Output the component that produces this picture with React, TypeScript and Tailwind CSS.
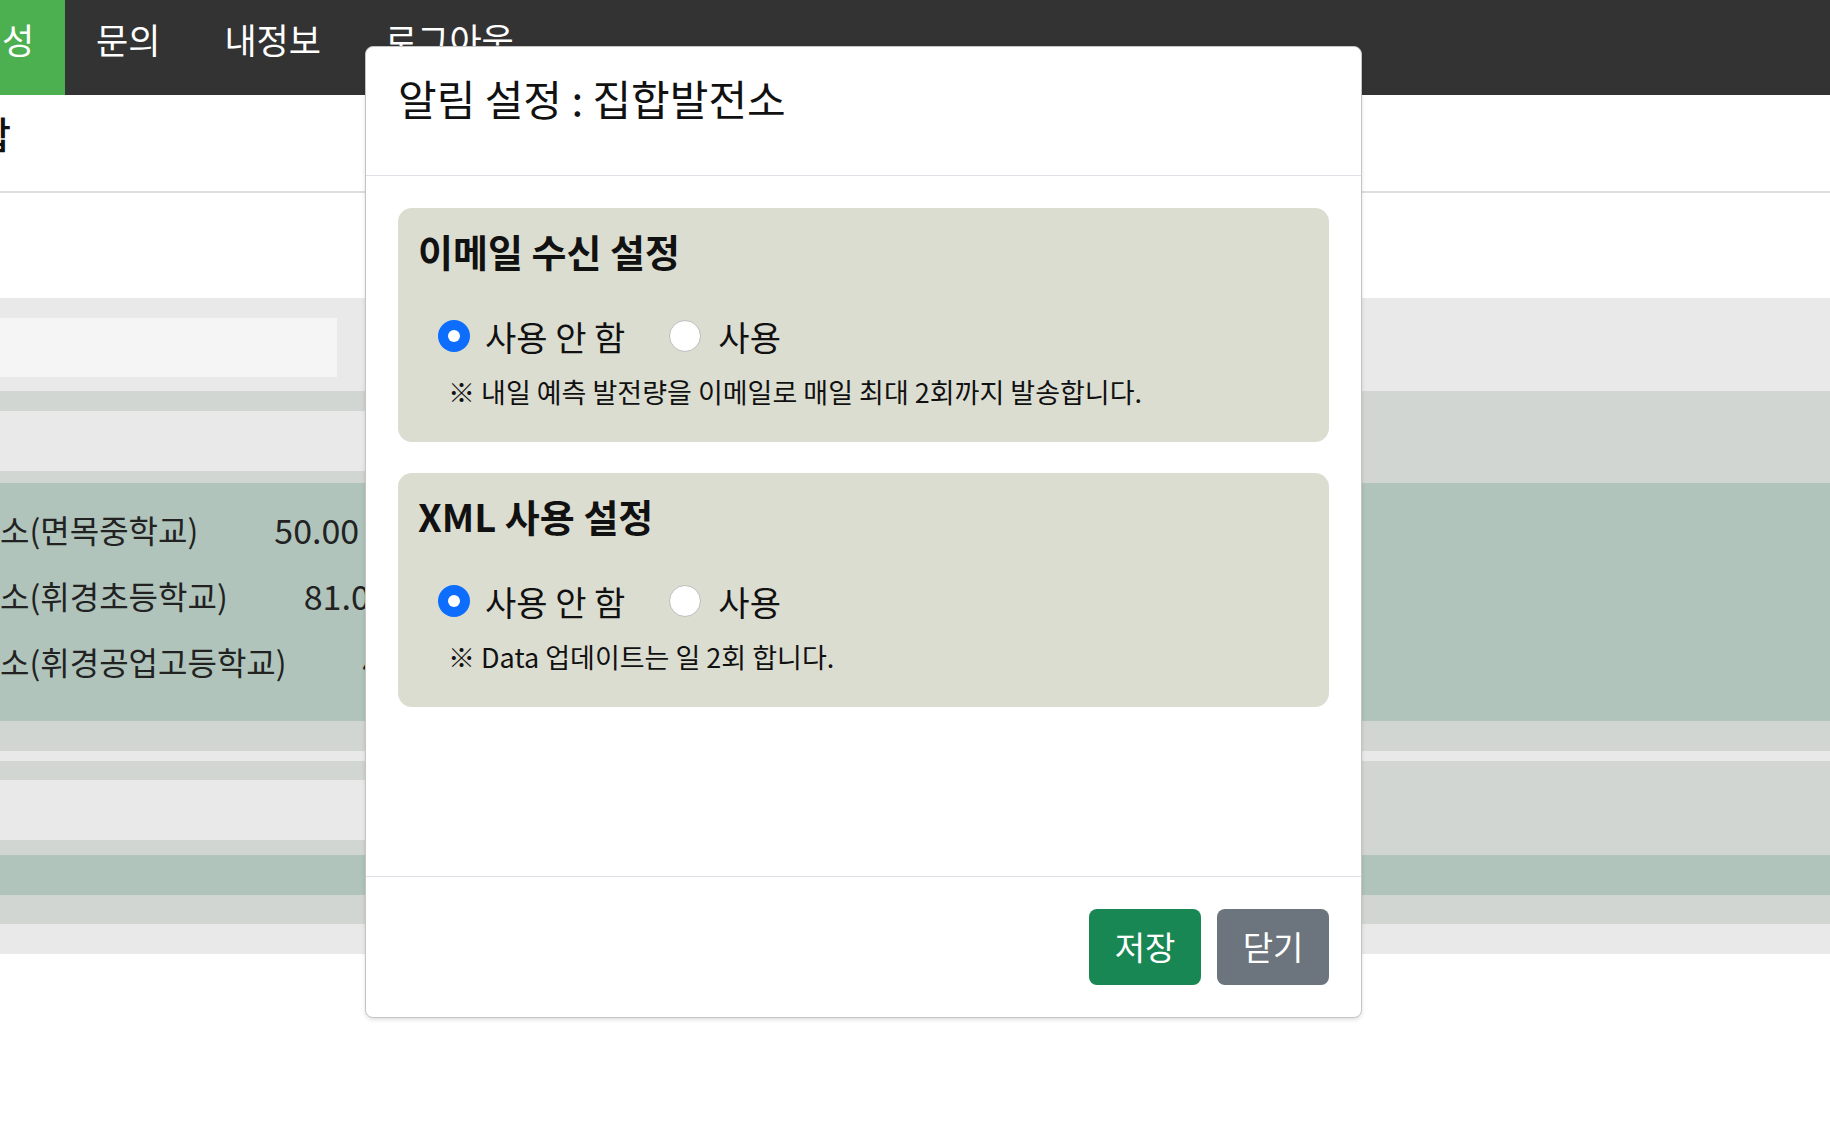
import React from "react";

const font = { fontFamily: '"Noto Sans CJK KR", "Noto Sans", sans-serif' };

const Radio = ({ checked }: { checked?: boolean }) =>
  checked ? (
    <span className="w-[32px] h-[32px] rounded-full bg-[#0d6efd] flex items-center justify-center shrink-0">
      <span className="w-[12px] h-[12px] rounded-full bg-white" />
    </span>
  ) : (
    <span className="block w-[32px] h-[32px] rounded-full bg-white border border-[#bdbdbd] shrink-0" />
  );

const SettingCard = ({ title, note }: { title: string; note: string }) => (
  <div className="bg-[#dcddd1] rounded-[14px] h-[234px] pt-[22px] pl-[20px]">
    <h5 className="text-[38px] leading-[42px] font-bold text-[#111]">{title}</h5>
    <div className="flex items-center h-[40px] mt-[44px] pl-[20px] text-[34px] text-[#111]">
      <Radio checked />
      <span className="ml-[15px]">사용 안 함</span>
      <span className="ml-[44px] flex">
        <Radio />
      </span>
      <span className="ml-[17px]">사용</span>
    </div>
    <p className="mt-[20px] pl-[30px] text-[27px] leading-[32px] text-[#111]">{note}</p>
  </div>
);

const rows = [
  { name: "소(면목중학교)", value: "50.00" },
  { name: "소(휘경초등학교)", value: "81.00" },
  { name: "소(휘경공업고등학교)", value: "45.00" },
];

export default function App() {
  return (
    <div className="relative w-[1830px] h-[1136px] overflow-hidden bg-white" style={font}>
      {/* top nav */}
      <nav className="flex h-[95px] bg-[#333333] text-white text-[35px]">
        <div className="w-[65px] bg-[#4caf50] pt-[13px] pl-[2px]">성</div>
        <div className="pl-[31px] pr-[32px] pt-[13px]">문의</div>
        <div className="px-[32px] pt-[13px]">내정보</div>
        <div className="px-[32px] pt-[13px]">로그아웃</div>
      </nav>

      <div className="h-[98px] border-b-2 border-[#dedede] pt-[14px] overflow-hidden">
        <h2 className="text-[38px] leading-[48px] font-medium text-[#111] -ml-[24px]">합</h2>
      </div>

      <div className="mt-[105px]">
        <div className="bg-[#e8e9e8] h-[93px] pt-[20px]">
          <div className="w-[337px] h-[59px] bg-[#f5f5f5]" />
        </div>
        <div className="bg-[#d1d6d2] py-[20px] h-[92px]">
          <div className="w-[900px] h-[60px] bg-[#e8e9e8]" />
        </div>
        <div className="bg-[#b0c4bb] h-[238px] pt-[13px] text-[32px] text-[#222]">
          {rows.map((r) => (
            <div key={r.name} className="h-[66px] flex items-center">
              <span>{r.name}</span>
              <span className="ml-[76px] text-[34px]">{r.value}</span>
            </div>
          ))}
        </div>
        <div className="bg-[#d1d6d2] h-[30px]" />
        <div className="bg-[#e8e9e8] h-[10px]" />
        <div className="bg-[#d1d6d2] h-[94px] pt-[19px]">
          <div className="w-[900px] h-[60px] bg-[#e8e9e8]" />
        </div>
        <div className="bg-[#b0c4bb] h-[40px]" />
        <div className="bg-[#d1d6d2] h-[29px]" />
        <div className="bg-[#e8e9e8] h-[30px]" />
      </div>

      {/* modal */}
      <div className="absolute left-[365px] top-[46px] w-[997px] bg-white border border-[#c4c4c4] rounded-[8px] shadow-[0_2px_4px_rgba(0,0,0,0.12)]">
        <div className="h-[129px] border-b border-[#dee2e6] px-[32px] pt-[26px]">
          <h5 className="text-[42px] leading-[50px] text-[#111]">알림 설정 : 집합발전소</h5>
        </div>
        <div className="h-[700px] px-[32px] pt-[32px] flex flex-col gap-[31px]">
          <SettingCard
            title="이메일 수신 설정"
            note="※ 내일 예측 발전량을 이메일로 매일 최대 2회까지 발송합니다."
          />
          <SettingCard title="XML 사용 설정" note="※ Data 업데이트는 일 2회 합니다." />
        </div>
        <div className="border-t border-[#dee2e6] h-[141px] flex items-center justify-end gap-[16px] px-[32px]">
          <button className="w-[112px] h-[76px] rounded-[8px] bg-[#198754] text-white text-[33px]">저장</button>
          <button className="w-[112px] h-[76px] rounded-[8px] bg-[#6c757d] text-white text-[33px]">닫기</button>
        </div>
      </div>
    </div>
  );
}
